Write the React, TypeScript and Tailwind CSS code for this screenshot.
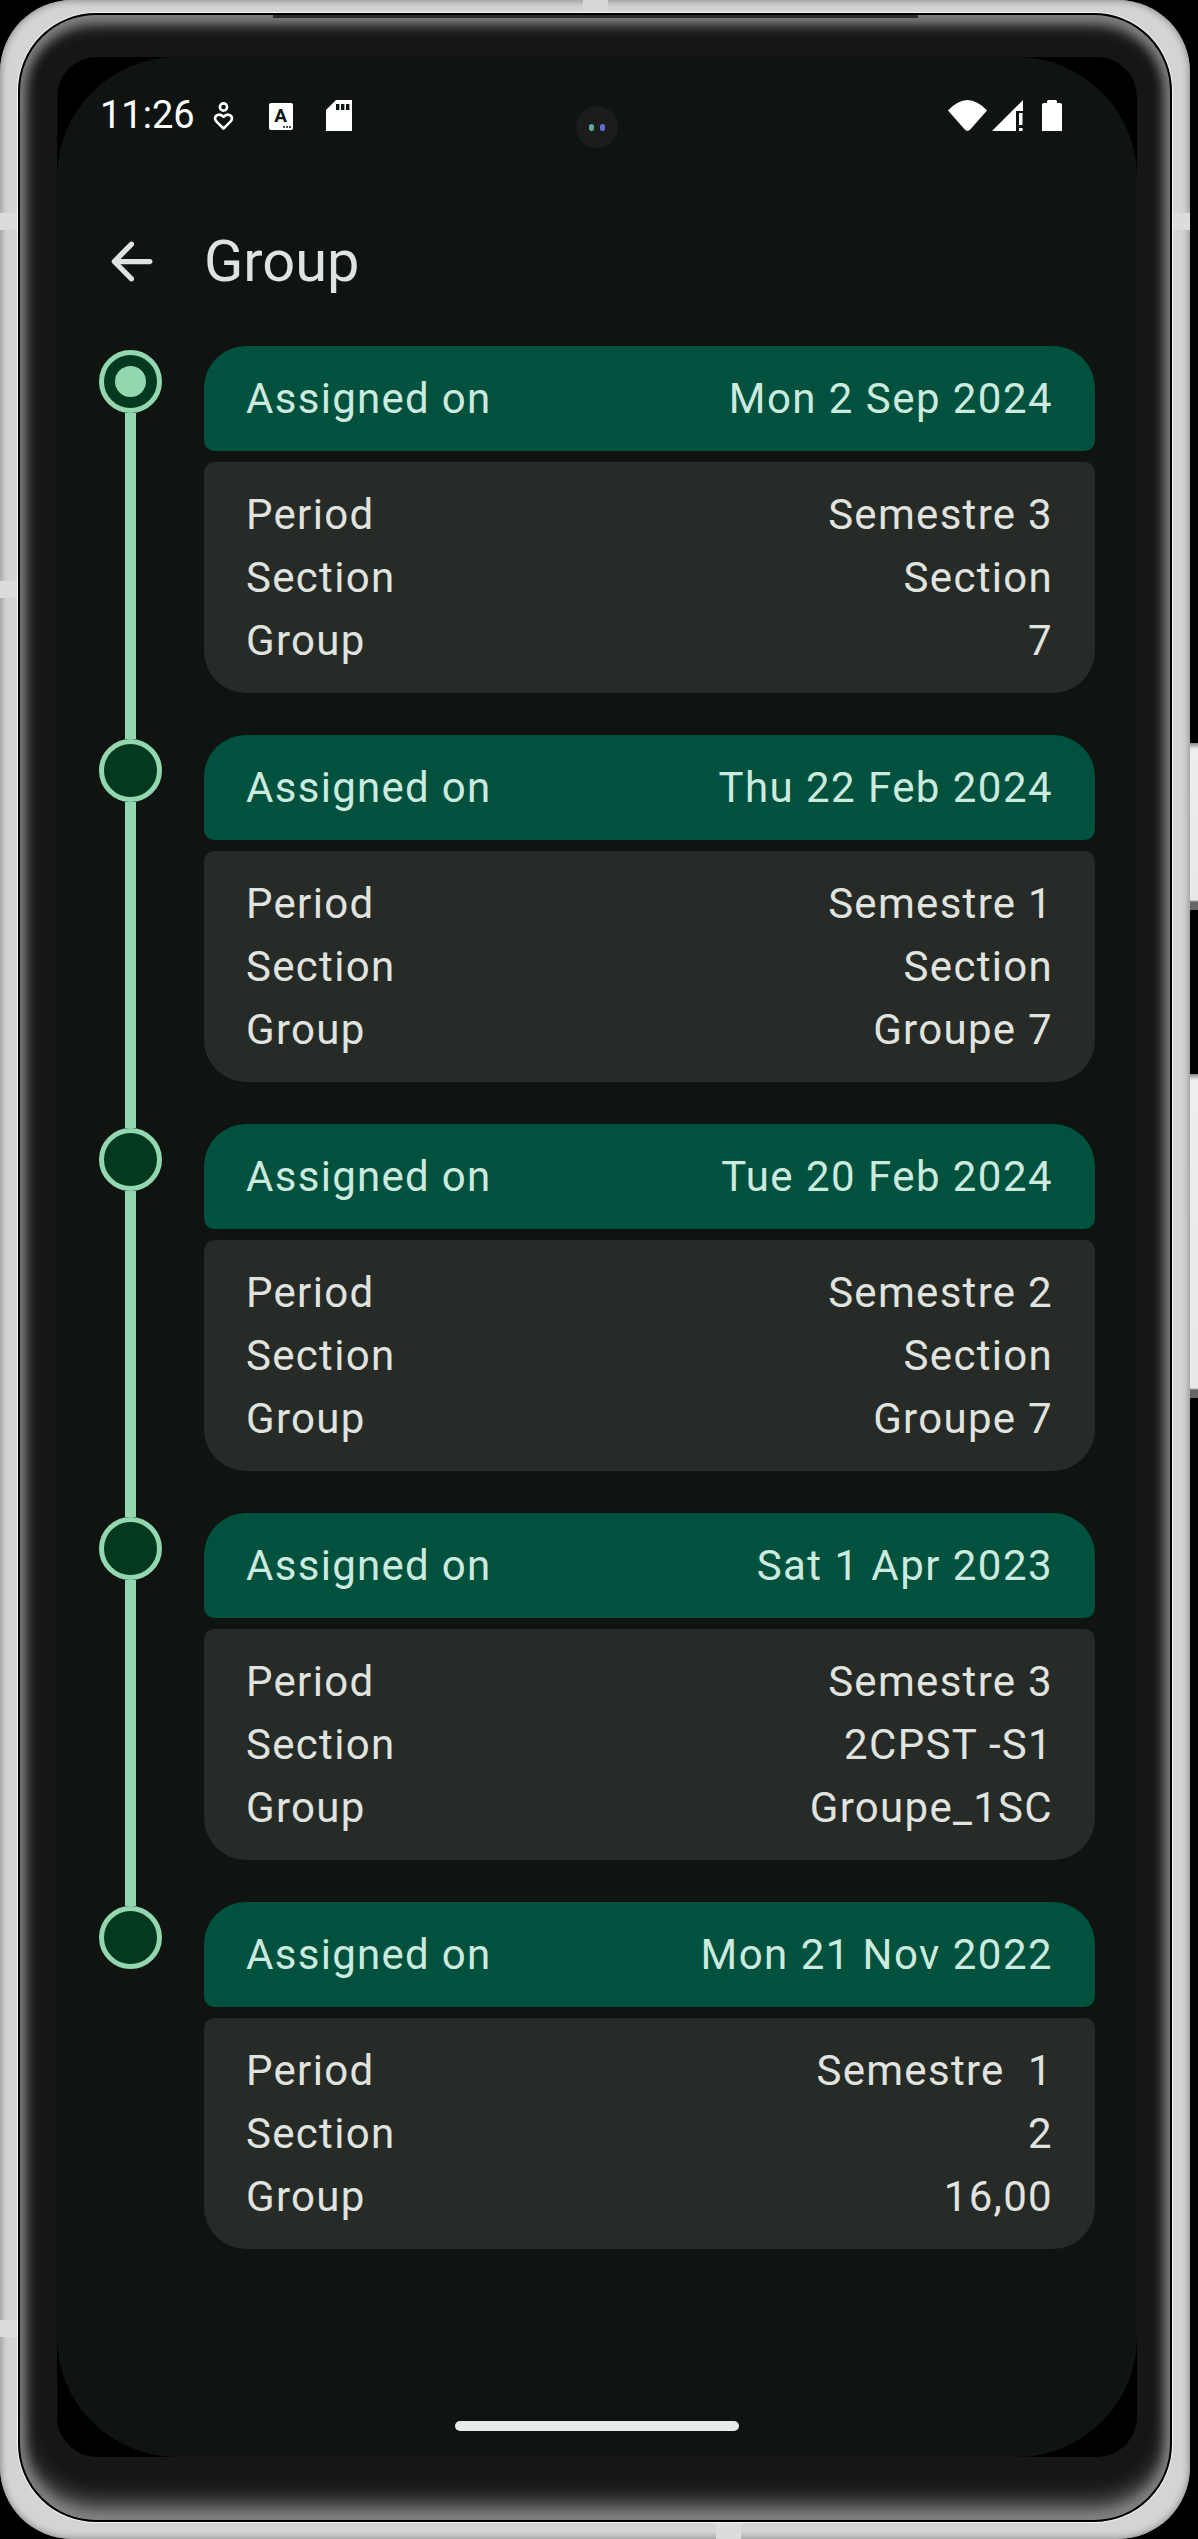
const rows = [
  { date: "Mon 2 Sep 2024", period: "Semestre 3", section: "Section", group: "7" },
  { date: "Thu 22 Feb 2024", period: "Semestre 1", section: "Section", group: "Groupe 7" },
  { date: "Tue 20 Feb 2024", period: "Semestre 2", section: "Section", group: "Groupe 7" },
  { date: "Sat 1 Apr 2023", period: "Semestre 3", section: "2CPST -S1", group: "Groupe_1SC" },
  { date: "Mon 21 Nov 2022", period: "Semestre\u00a0\u00a01", section: "2", group: "16,00" },
];

function HeartIcon() {
  return (
    <svg width="21" height="31" viewBox="0 0 21 31" fill="none" stroke="#fff" strokeWidth="2.6">
      <circle cx="10.5" cy="7" r="3.6" />
      <path d="M10.5 16.8c-1.6-1.7-3.4-2.4-5-2.1-2.2.4-3.6 2.2-3.4 4.1.1 1.2.8 2.2 1.7 3.1l6.7 6.6 6.7-6.6c.9-.9 1.6-1.9 1.7-3.1.2-1.9-1.2-3.7-3.4-4.1-1.6-.3-3.400.4-5 2.100z" strokeLinejoin="round" />
    </svg>
  );
}

function SdIcon() {
  return (
    <svg width="26" height="31" viewBox="0 0 26 31">
      <path d="M10 0H26V31H0V10Z" fill="#fff" />
      <rect x="10" y="4" width="3.4" height="6" fill="#0f1411" />
      <rect x="15" y="4" width="3.4" height="6" fill="#0f1411" />
      <rect x="20" y="4" width="3.4" height="6" fill="#0f1411" />
    </svg>
  );
}

function WifiIcon() {
  return (
    <svg width="39" height="31" viewBox="0 0 39 31">
      <path d="M0 10.500Q19.500 -10.500 39 10.500L22 29.800Q19.500 32 17 29.800Z" fill="#fff" />
    </svg>
  );
}

function SignalIcon() {
  return (
    <svg width="31" height="31" viewBox="0 0 31 31">
      <path d="M0 31L31 0V11H24V31Z" fill="#fff" />
      <rect x="27" y="13" width="3.500" height="12" fill="#fff" />
      <rect x="27" y="28" width="3.500" height="3" fill="#fff" />
    </svg>
  );
}

function BatteryIcon() {
  return (
    <svg width="20" height="31" viewBox="0 0 20 31">
      <path d="M5 3V1.500Q5 0 6.500 0H13.500Q15 0 15 1.500V3H18Q20 3 20 5V31H0V5Q0 3 2 3Z" fill="#fff" />
    </svg>
  );
}

function Row({ label, value }: { label: string; value: string }) {
  return (
    <div className="flex h-[63px] items-center justify-between">
      <span>{label}</span>
      <span className="whitespace-pre">{value}</span>
    </div>
  );
}

export default function App() {
  return (
    <div className="relative h-[2539px] w-[1198px] overflow-hidden bg-black font-['Roboto',sans-serif]">
      {/* right side buttons */}
      <div className="absolute left-[1188px] top-[743px] h-[167px] w-[10px] bg-[linear-gradient(180deg,#888_0px,#eee_6px,#e8e8e8_calc(100%-10px),#666_calc(100%-8px),#666_100%)]" />
      <div className="absolute left-[1188px] top-[1074px] h-[324px] w-[10px] bg-[linear-gradient(180deg,#888_0px,#eee_6px,#e8e8e8_calc(100%-10px),#666_calc(100%-8px),#666_100%)]" />

      {/* silver frame */}
      <div className="relative h-[2539px] w-[1190px] rounded-[72px] bg-[#d4d4d4] pb-[17px] pl-[18px] pr-[18px] pt-[13px] shadow-[inset_0_0_7px_1px_#8a8a8a]">
        {/* antenna bands and nubs */}
        <div className="absolute left-0 top-[213px] h-[17px] w-[17px] bg-[#dcdcdc]" />
        <div className="absolute left-0 top-[581px] h-[17px] w-[17px] bg-[#dcdcdc]" />
        <div className="absolute left-0 top-[2320px] h-[17px] w-[17px] bg-[#dcdcdc]" />
        <div className="absolute right-0 top-[213px] h-[17px] w-[17px] bg-[#dcdcdc]" />
        <div className="absolute left-[583px] top-0 h-[15px] w-[25px] bg-[#d8d8d8]" />
        <div className="absolute left-[716px] top-[2523px] h-[16px] w-[25px] bg-[#dcdcdc]" />

        {/* bezel */}
        <div className="relative h-[2509px] w-[1154px] rounded-[78px] border-2 border-black bg-[#161616] pb-[63px] pl-[37px] pr-[33px] pt-[42px] shadow-[0_0_0_1px_#f4f4f4,inset_0_0_12px_5px_#808080,inset_0_14px_16px_-6px_#808080,inset_0_-22px_26px_-8px_#8c8c8c]">
          <div className="absolute left-[253px] top-0 h-[3px] w-[645px] bg-[#2a2a2a]" />

          {/* black display area */}
          <div className="h-[2400px] w-[1080px] rounded-[40px] bg-black">
            {/* screen */}
            <div className="relative flex h-[2400px] w-[1080px] flex-col rounded-[120px] bg-[#0f1411]">
              {/* status bar */}
              <div className="flex h-[74px] items-start pl-[43px] pr-[75px] pt-[43px]">
                <span className="h-[31px] text-[38px] leading-[31px] text-white">11:26</span>
                <div className="ml-[18px]"><HeartIcon /></div>
                <div className="relative ml-[35px] mt-[3px] flex h-[27px] w-[24px] items-center justify-center rounded-[2px] bg-white pb-[2px] text-[19px] font-bold leading-none text-[#0f1411]">
                  A
                  <div className="absolute bottom-[2px] right-[2px] flex gap-[1px]">
                    <span className="h-[2px] w-[2px] rounded-full bg-[#0f1411]" />
                    <span className="h-[2px] w-[2px] rounded-full bg-[#0f1411]" />
                    <span className="h-[2px] w-[2px] rounded-full bg-[#0f1411]" />
                  </div>
                </div>
                <div className="ml-[33px]"><SdIcon /></div>
                <div className="ml-auto flex">
                  <WifiIcon />
                  <div className="ml-[5px]"><SignalIcon /></div>
                  <div className="ml-[19px]"><BatteryIcon /></div>
                </div>
              </div>

              {/* camera */}
              <div className="absolute left-[519px] top-[49px] flex h-[42px] w-[42px] items-center justify-center gap-[6px] rounded-full bg-[#1b1d1d]">
                <span className="h-[7px] w-[5px] rounded-full bg-[#5fa8a0]" />
                <span className="h-[7px] w-[5px] rounded-full bg-[#5f6fd0]" />
              </div>

              {/* app bar */}
              <div className="ml-[42.500px] mt-[99px] flex h-[63px] items-center">
                <svg width="63" height="63" viewBox="0 0 24 24" fill="#e0e3df">
                  <path d="M19 11H7.830l4.880-4.880c.39-.39.39-1.030 0-1.420-.39-.39-1.020-.39-1.410 0l-6.590 6.590c-.39.39-.39 1.020 0 1.410l6.590 6.590c.39.39 1.020.39 1.410 0 .39-.39.39-1.020 0-1.410L7.830 13H19c.55 0 1-.45 1-1s-.45-1-1-1z" />
                </svg>
                <span className="ml-[41.500px] text-[57.750px] leading-[63px] text-[#e0e3df]">Group</span>
              </div>

              {/* timeline */}
              <div className="mt-[53px] flex flex-col pl-[42px] pr-[42px]">
                {rows.map((r, i) => (
                  <div key={r.date} className="flex">
                    <div className={i < rows.length - 1 ? "-mb-[4px] mt-[4px] flex w-[63px] shrink-0 flex-col items-center" : "mt-[4px] flex w-[63px] shrink-0 flex-col items-center"}>
                      <div className="flex h-[63px] w-[63px] shrink-0 items-center justify-center rounded-full border-[5.250px] border-[#93d7b0] bg-[#03391f]">
                        {i === 0 && <div className="h-[31.500px] w-[31.500px] rounded-full bg-[#93d7b0]" />}
                      </div>
                      {i < rows.length - 1 && <div className="w-[10.500px] flex-1 bg-[#93d7b0]" />}
                    </div>
                    <div className="ml-[42px] flex-1 pb-[42px] text-[42px] leading-[63px] tracking-[1.300px]">
                      <div className="flex h-[105px] items-center justify-between rounded-b-[10.500px] rounded-t-[42px] bg-[#00513e] px-[42px] text-[#cdeade]">
                        <span>Assigned on</span>
                        <span className="tracking-[1.450px]">{r.date}</span>
                      </div>
                      <div className="mt-[11px] rounded-b-[42px] rounded-t-[10.500px] bg-[#272b28] px-[42px] py-[21px] text-[#e0e3df]">
                        <Row label="Period" value={r.period} />
                        <Row label="Section" value={r.section} />
                        <Row label="Group" value={r.group} />
                      </div>
                    </div>
                  </div>
                ))}
              </div>

              {/* gesture bar */}
              <div className="mb-[26px] ml-[398px] mt-auto h-[10px] w-[284px] rounded-full bg-[#e8ece8]" />
            </div>
          </div>
        </div>
      </div>
    </div>
  );
}
